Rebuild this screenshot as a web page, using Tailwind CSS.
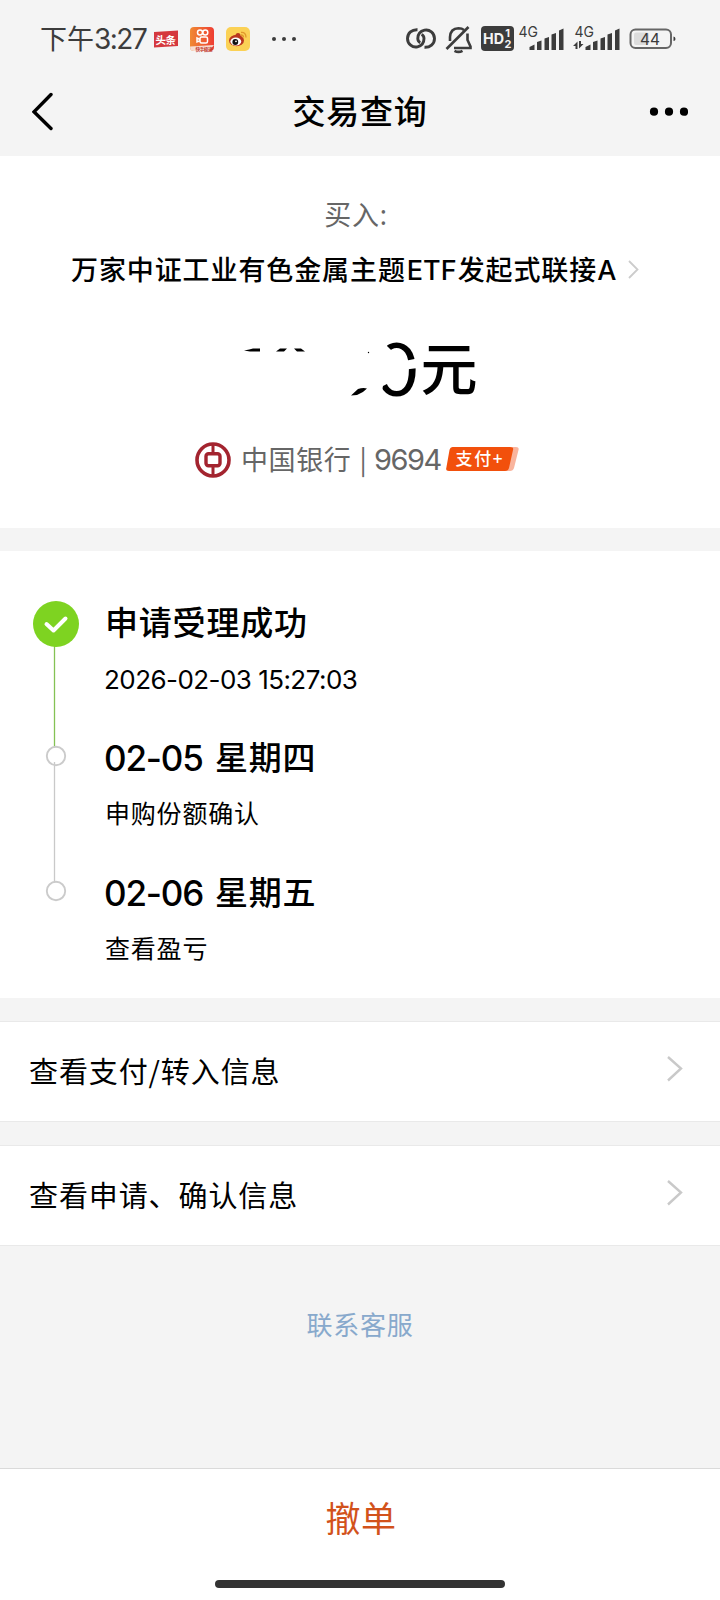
<!DOCTYPE html>
<html lang="zh-CN">
<head>
<meta charset="utf-8">
<title>交易查询</title>
<script src="https://cdn.jsdelivr.net/npm/@tailwindcss/browser@4"></script>
</head>
<body class="bg-[#f4f4f4]">
<div class="w-[720px] h-[1600px] overflow-hidden flex flex-col bg-[#f4f4f4] text-black font-['Noto_Sans_CJK_SC',sans-serif]">

  <!-- status bar -->
  <div class="h-[76px] shrink-0 flex items-start pt-[22px] pl-10 text-[#3c3c3c]">
    <div class="w-[114px] h-8 leading-8 text-[27px] whitespace-nowrap">下午<span class="font-['Inter',sans-serif] text-[28px] tracking-[-1.5px]">3:27</span></div>
    <svg class="w-[150px] h-8 shrink-0" viewBox="154 22 150 32">
      <path d="M154 32L178 30.500L178 46L154 47.500Z" fill="#d5383e"/>
      <text x="155.500" y="43.500" font-size="10.500" font-weight="700" fill="#fff" textLength="20.500">头条</text>
      <defs><linearGradient id="k" x1="0" y1="0" x2="1" y2="0"><stop offset="0" stop-color="#f08a32"/><stop offset="1" stop-color="#ee3d33"/></linearGradient></defs>
      <rect x="190" y="27" width="24" height="24" rx="4" fill="url(#k)"/>
      <path d="M190 46.500L214 45L209 51H194Q190 51 190 46.500Z" fill="#f7ddd2"/>
      <g fill="none" stroke="#fff" stroke-width="1.500"><circle cx="200" cy="32.500" r="2.500"/><circle cx="205.300" cy="32.500" r="2.500"/><rect x="200" y="37" width="7.500" height="6" rx="1.500"/><path d="M200 39.500L197 38V42L200 40.800"/></g>
      <text x="195.500" y="50.600" font-size="4.600" font-weight="700" fill="#c23b31" textLength="17">快手极速</text>
      <rect x="226" y="27" width="24" height="24" rx="5" fill="#fbd155"/>
      <ellipse cx="236.500" cy="40.500" rx="7.500" ry="5.800" fill="#b9361f"/>
      <circle cx="238" cy="35.500" r="2.500" fill="#b9361f"/>
      <ellipse cx="235.800" cy="41.500" rx="5.400" ry="4" fill="#fff"/>
      <circle cx="235.300" cy="42" r="2.900" fill="#111"/><circle cx="236" cy="41.300" r=".9" fill="#fff"/>
      <path d="M241 32.500Q246 32 246 37.500M241 35Q243.500 35 243.500 37.500" fill="none" stroke="#e0982c" stroke-width="1.300"/>
      <g fill="#3c3c3c"><circle cx="274" cy="39" r="2"/><circle cx="284" cy="39" r="2"/><circle cx="294" cy="39" r="2"/></g>
    </svg>
    <svg class="w-[280px] h-8 shrink-0 ml-[96px] font-['Inter',sans-serif]" viewBox="400 22 280 32" fill="none" stroke="#3c3c3c">
      <g stroke-width="2.900">
        <path d="M417.500 29.700C412 29.400 407.500 33 407.500 38.500C407.500 44 412.500 48 417.500 46.800C421.500 45.800 424 42.500 424 38.500Q424 35.500 421.500 34.500"/>
        <path d="M424.500 47.300C430 47.600 434.500 44 434.500 38.500C434.500 33 429.500 29 424.500 30.200C420.500 31.200 417.800 34.500 417.800 38.500Q417.800 41.500 420.300 42.600"/>
      </g>
      <g stroke-width="2.600">
        <path d="M450 41V37Q450.500 28.500 458.500 28.300Q462 28.300 464 30M467.500 33.500V40L470.500 46.500V48H454"/>
        <path d="M446.500 49L468.500 27"/>
        <path d="M454.500 50.800Q458.500 53 462.500 50.800"/>
      </g>
      <rect x="481" y="26" width="33" height="25" rx="4" fill="#3c3c3c" stroke="none"/>
      <g fill="#f4f4f4" stroke="none" font-weight="700">
        <text x="483" y="44" font-size="15" textLength="21" lengthAdjust="spacingAndGlyphs">HD</text>
        <text x="505.300" y="37.300" font-size="11">1</text><text x="504.500" y="48.300" font-size="11">2</text>
      </g>
      <g fill="#3c3c3c" stroke="none" font-size="14.500">
        <text x="518.500" y="37" textLength="19.500" lengthAdjust="spacingAndGlyphs">4G</text><text x="574.500" y="37" textLength="19.500" lengthAdjust="spacingAndGlyphs">4G</text>
      </g>
      <g fill="#3c3c3c" stroke="none">
        <path d="M529.500 50V47L534.500 44.500V50ZM537 50V42L541.500 40.500V50ZM544.500 50V38.500L549 37V50ZM551.500 50V34.500L556 33V50ZM559 50V30.500L563.500 28.500V50Z"/>
        <path d="M585.500 50V47L590.500 44.500V50ZM593 50V42L597.500 40.500V50ZM600.500 50V38.500L605 37V50ZM607.500 50V34.500L612 33V50ZM615 50V30.500L619.500 28.500V50Z"/>
        <path d="M573 46L577.500 41.500V49H575.500V46ZM583.500 44L579 48.500V41H581V44Z"/>
      </g>
      <rect x="630.500" y="29.500" width="40.500" height="18.500" rx="5" stroke-width="2" stroke="#666"/>
      <rect x="634" y="32.500" width="15" height="12.500" rx="2" fill="#dcdcdc" stroke="none"/>
      <path d="M673.500 36.500Q675.500 36.500 675.500 39Q675.500 41 673.500 41Z" fill="#3c3c3c" stroke="none"/>
      <text x="640" y="44.700" font-size="16.500" fill="#3c3c3c" stroke="none" textLength="20" lengthAdjust="spacingAndGlyphs">44</text>
    </svg>
  </div>

  <!-- nav bar -->
  <div class="h-20 shrink-0 flex items-start justify-between pl-8 pr-8 pt-4">
    <svg class="w-[120px] h-10" viewBox="32 92 120 40"><path d="M51 94.500L34 111.800L51 128.500" fill="none" stroke="#000" stroke-width="3.400" stroke-linecap="round"/></svg>
    <div class="h-10 leading-[36px] text-[33px] font-medium tracking-[0.8px]">交易查询</div>
    <svg class="w-[120px] h-10" viewBox="568 92 120 40"><circle cx="654" cy="111.700" r="4.100"/><circle cx="669" cy="111.700" r="4.100"/><circle cx="684" cy="111.700" r="4.100"/></svg>
  </div>

  <!-- order summary -->
  <section class="h-[372px] shrink-0 bg-white flex flex-col items-center">
    <div class="mt-[38px] h-10 leading-10 text-[27px] tracking-[0.8px] text-[#666] pr-2">买入<span class="font-['Noto_Sans',sans-serif]">:</span></div>
    <div class="mt-[15px] h-10 w-full pl-[71px] flex items-center whitespace-nowrap">
      <span class="w-[547px] h-10 leading-10 text-[27px] font-medium tracking-[0.9px]">万家中证工业有色金属主题<span class="font-['Inter',sans-serif] tracking-[0px] px-px">ETF</span>发起式联接<span class="font-['Inter',sans-serif]">A</span></span>
      <svg class="ml-[8px] w-4 h-6" viewBox="626 258 16 24"><path d="M629 262L637.500 270.500L629 279" fill="none" stroke="#ccc" stroke-width="1.800"/></svg>
    </div>
    <!-- partly erased amount -->
    <svg class="mt-[41px] w-[300px] h-[76px] shrink-0 overflow-visible" viewBox="210 330 300 76">
      <text class="font-['Lato',sans-serif]" x="375.500" y="395.500" font-size="73" font-weight="400">0</text>
      <path d="M368 336H387V346Q399 356 399 369Q396 381 383 386L380 400H368Z" fill="#fff"/>
      <path d="M402 361.500L422 357.500V367.500L402 370Z" fill="#fff"/>
      <text x="420.500" y="390" font-size="57" font-weight="500">元</text>
      <path d="M244 350.500Q250 349.500 253 348.500H260V351.500H250ZM276 351.500L280 348.500H287L284 351.500ZM294 348.500H301L305 351.500H297ZM351 395.500L358 389Q363 387.500 367 388.500Q363 393 357 395Z"/>
      <circle cx="368.500" cy="352.500" r=".7"/>
    </svg>
    <div class="mt-[34px] h-10 w-full pl-[194px] flex items-center text-[27px] text-[#666] whitespace-nowrap">
      <svg class="w-[38px] h-9 shrink-0" viewBox="194 442 38 36" fill="none" stroke="#a3242f"><circle cx="213" cy="460" r="16" stroke-width="3.600"/><rect x="206" y="453.800" width="14" height="12" rx="2.500" stroke-width="3.400"/><path d="M213 444V453M213 467V476" stroke-width="3"/></svg>
      <span class="ml-[9px] w-[133px] h-10 leading-[38px] tracking-[0.6px]">中国银行<span class="pl-[8px]">|</span></span>
      <span class="w-[71px] h-10 leading-[40px] font-['Inter',sans-serif] text-[29px] tracking-[-1.5px]">9694</span>
      <svg class="w-[76px] h-7" viewBox="445 446 76 28"><path d="M452 447H516Q519.500 447 518.500 450L514 468Q513 471 510 471H452Z" fill="#f9b49d"/><path d="M453 447H510Q514 447 513 450L509 468Q508.200 471 505 471H449Q445.500 471 446.300 468L449.500 450Q450.200 447 453 447Z" fill="#f2500c"/><text x="455.500" y="465.300" font-size="17" fill="#fff" font-weight="500" textLength="47">支付+</text></svg>
    </div>
  </section>

  <!-- progress timeline -->
  <section class="mt-[23px] h-[447px] shrink-0 bg-white flex">
    <svg class="w-[105px] h-[447px] shrink-0" viewBox="0 551 105 447" fill="none">
      <path d="M54.500 645V747" stroke="#84c254" stroke-width="1.300"/>
      <path d="M54.500 762V882" stroke="#c9c9c9" stroke-width="1.300"/>
      <circle cx="56" cy="624" r="23" fill="#7ed321"/>
      <path d="M46.500 624L53.500 630.500L65.500 618.500" stroke="#fff" stroke-width="4" stroke-linecap="round" stroke-linejoin="round"/>
      <circle cx="56" cy="756" r="9.200" stroke="#cbcbcb" stroke-width="1.900"/>
      <circle cx="56" cy="891" r="9.200" stroke="#cbcbcb" stroke-width="1.900"/>
    </svg>
    <div class="pt-[47px] whitespace-nowrap">
      <div class="h-[135px]">
        <div class="h-[48px] leading-[46px] text-[33px] font-medium tracking-[0.8px]">申请受理成功</div>
        <div class="mt-[13px] h-10 leading-[42px] -ml-px font-['Inter',sans-serif] text-[26px] tracking-[-0.55px]">2026-02-03 15:27:03</div>
      </div>
      <div class="h-[135px]">
        <div class="h-[48px] flex leading-[46px] text-[33px] font-medium tracking-[0.8px]"><span class="w-[111px] -ml-px leading-[50px] font-['Inter',sans-serif] text-[35px] tracking-[-1.2px]">02-05</span><span>星期四</span></div>
        <div class="mt-[12px] h-10 leading-[38px] text-[25px] tracking-[0.8px]">申购份额确认</div>
      </div>
      <div>
        <div class="h-[48px] flex leading-[46px] text-[33px] font-medium tracking-[0.8px]"><span class="w-[111px] -ml-px leading-[50px] font-['Inter',sans-serif] text-[35px] tracking-[-1.2px]">02-06</span><span>星期五</span></div>
        <div class="mt-[12px] h-10 leading-[38px] text-[25px] tracking-[0.8px]">查看盈亏</div>
      </div>
    </div>
  </section>

  <!-- detail links -->
  <div class="mt-[23px] h-[101px] shrink-0 bg-white border-y border-[#e9e9e9] flex items-start justify-between pl-[29px] pr-[37px] pt-[28px]">
    <span class="h-10 leading-10 text-[29px] tracking-[0.9px]">查看支付/转入信息</span>
    <svg class="mt-1 w-4 h-7" viewBox="668 1054 16 28"><path d="M669 1057L682 1068.500L669 1080.500" fill="none" stroke="#c9c9c9" stroke-width="2.400"/></svg>
  </div>
  <div class="mt-[23px] h-[101px] shrink-0 bg-white border-y border-[#e9e9e9] flex items-start justify-between pl-[29px] pr-[37px] pt-[28px]">
    <span class="h-10 leading-10 text-[29px] tracking-[0.9px]">查看申请、确认信息</span>
    <svg class="mt-1 w-4 h-7" viewBox="668 1054 16 28"><path d="M669 1057L682 1068.500L669 1080.500" fill="none" stroke="#c9c9c9" stroke-width="2.400"/></svg>
  </div>

  <div class="grow flex justify-center pt-[58px]"><a class="h-10 leading-10 text-[26px] tracking-[0.8px] text-[#88a9cc]">联系客服</a></div>

  <!-- cancel order -->
  <div class="h-[132px] shrink-0 bg-white border-t border-[#dadada] flex flex-col items-center">
    <div class="mt-[23px] h-[50px] leading-[50px] pl-[2px] text-[35px] tracking-[0.5px] text-[#d2521b]">撤单</div>
    <div class="mt-[38px] w-[290px] h-2 rounded-full bg-[#333]"></div>
  </div>
</div>
</body>
</html>
